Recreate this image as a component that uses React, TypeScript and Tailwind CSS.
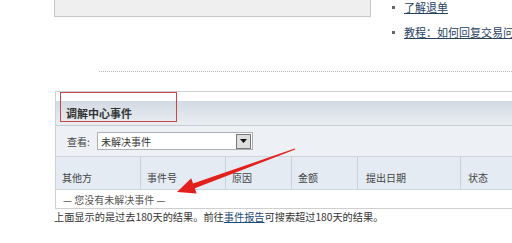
export default function App() {
  return (
    <div className="relative w-[512px] h-[243px] overflow-hidden bg-white text-[#333] font-['Noto_Sans_CJK_SC','Noto_Sans',sans-serif]">
      {/* top area */}
      <div className="flex h-[45px]">
        <div className="ml-[54px] w-[317px] h-[17px] border border-t-0 border-[#c8c8c8] bg-[#efefef] shrink-0" />
        <ul className="ml-[21px] flex flex-col gap-[11px] whitespace-nowrap">
          <li className="flex items-center h-[14px] text-[11px] leading-[14px]">
            <span className="w-[3px] h-[3px] bg-[#666] mr-[9px] shrink-0" />
            <a className="underline text-[#27425f]">了解退单</a>
          </li>
          <li className="flex items-center h-[14px] text-[11px] leading-[14px]">
            <span className="w-[3px] h-[3px] bg-[#666] mr-[9px] shrink-0" />
            <a className="underline text-[#27425f]">教程：如何回复交易问题</a>
          </li>
        </ul>
      </div>

      {/* dotted divider */}
      <div className="mt-[26px] ml-[99px] border-t border-dotted border-[#b8b8b8]" />

      {/* panel */}
      <div className="mt-[19px] ml-[55px] w-[470px] border-l border-t border-[#cfcfcf]">
        <div className="h-[9px] bg-white" />
        <div className="h-[25px] border-b border-[#c6ccd3] bg-linear-to-b from-[#d3dae3] to-[#eaeef2] flex items-center pl-[10px] text-[11px] leading-[14px] font-bold text-[#333]">
          调解中心事件
        </div>
        <div className="h-[31px] border-b border-[#cfd4da] bg-[#edf0f4] flex items-center pl-[11px] text-[10px] leading-[13px]">
          <span className="w-[30px] text-[#444]">查看:</span>
          <div className="w-[156px] h-[18px] border border-[#a9b0b8] bg-white flex items-center">
            <span className="flex-1 pl-[3px] text-[10px] leading-[13px]">未解决事件</span>
            <div className="w-[15px] h-[15px] mr-[1px] border border-[#777] bg-[#dedede] flex items-center justify-center">
              <svg width="7" height="4" viewBox="0 0 7 4">
                <path d="M0 0 H7 L3.5 4 Z" fill="#111" />
              </svg>
            </div>
          </div>
        </div>
        <div className="h-[33px] border-b border-[#cfd5dc] bg-[#e4ebf3] grid grid-cols-[85px_85px_66px_66px_103px_1fr] text-[10px] leading-[12px] text-[#444]">
          <div className="border-r border-[#c9d1da] flex items-end pb-[5px] pl-[6px]">其他方</div>
          <div className="border-r border-[#c9d1da] flex items-end pb-[5px] pl-[6px]">事件号</div>
          <div className="border-r border-[#c9d1da] flex items-end pb-[5px] pl-[6px]">原因</div>
          <div className="border-r border-[#c9d1da] flex items-end pb-[5px] pl-[6px]">金额</div>
          <div className="border-r border-[#c9d1da] flex items-end pb-[5px] pl-[8px]">提出日期</div>
          <div className="flex items-end pb-[5px] pl-[7px]">状态</div>
        </div>
        <div className="h-[19px] border-b border-[#cfcfcf] bg-white flex items-center pl-[7px] text-[10px] leading-[13px] text-[#555]">
          — 您没有未解决事件 —
        </div>
      </div>

      {/* footer */}
      <p className="ml-[54px] mt-[1px] text-[10.2px] leading-[13px] text-[#333] whitespace-nowrap">
        上面显示的是过去180天的结果。前往<a className="underline text-[#1d4a78]">事件报告</a>可搜索超过180天的结果。
      </p>

      {/* red highlight box */}
      <div className="absolute left-[60px] top-[92px] w-[117px] h-[30px] border border-[#c8464a]" />

      {/* red arrow */}
      <svg className="absolute left-0 top-0 pointer-events-none" width="512" height="243" viewBox="0 0 512 243">
        <polygon
          points="177,192 191.2,178.3 193,183.5 294.8,148.4 295.2,149.6 194.8,188.2 196.6,193.5"
          fill="#e3201c"
        />
      </svg>
    </div>
  );
}
